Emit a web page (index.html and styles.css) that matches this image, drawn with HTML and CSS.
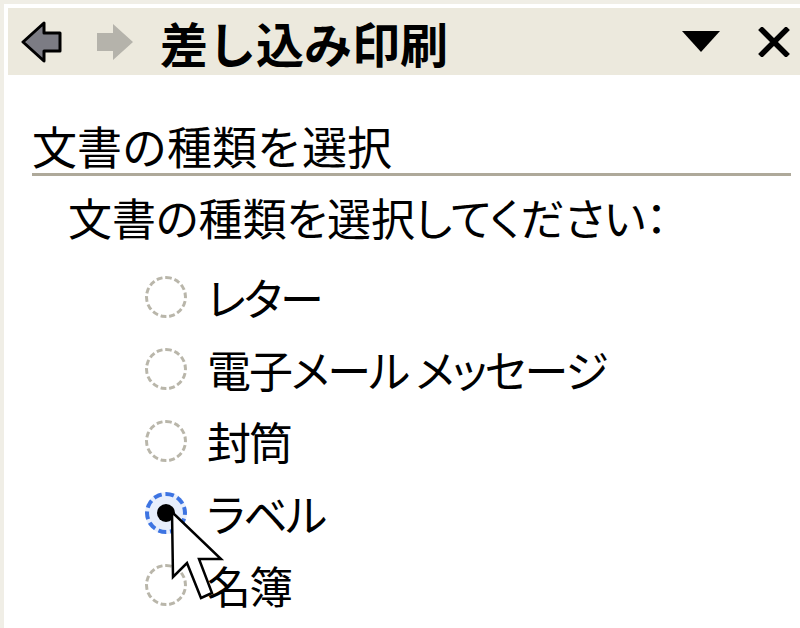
FILE: index.html
```html
<!DOCTYPE html>
<html lang="ja">
<head>
<meta charset="utf-8">
<link rel="stylesheet" href="styles.css">
</head>
<body>
<div class="frame">
  <div class="panel">
    <div class="header">
      <svg class="nav back" viewBox="0 0 42 42" width="42" height="42">
        <polygon points="2,21 23,2 23,12 39,12 39,30 23,30 23,40" fill="#7c7c84" stroke="#000" stroke-width="3" stroke-linejoin="round"/>
      </svg>
      <svg class="nav fwd" viewBox="0 0 40 40" width="40" height="40">
        <polygon points="38,20 18,2 18,11 2,11 2,29 18,29 18,38" fill="#b5b3ab"/>
      </svg>
      <div class="title">差し込み印刷</div>
      <svg class="drop" viewBox="0 0 38 22" width="38" height="22">
        <polygon points="0,0 38,0 19,21" fill="#000"/>
      </svg>
      <svg class="close" viewBox="0 0 32 30" width="32" height="30">
        <path d="M4 3 L28 27 M28 3 L4 27" stroke="#000" stroke-width="5.5" stroke-linecap="square"/>
      </svg>
    </div>
    <div class="content">
      <div class="section">文書の種類を選択</div>
      <div class="prompt">文書の種類を選択してください：</div>
      <ul class="options">
        <li class="opt"><span class="radio"></span><span class="label">レター</span></li>
        <li class="opt"><span class="radio"></span><span class="label">電子メール メッセージ</span></li>
        <li class="opt"><span class="radio"></span><span class="label">封筒</span></li>
        <li class="opt"><span class="radio checked"></span><span class="label">ラベル</span></li>
        <li class="opt"><span class="radio"></span><span class="label">名簿</span></li>
      </ul>
    </div>
  </div>
  <svg class="cursor" viewBox="0 0 60 96" width="60" height="96">
    <polygon points="2,2 3,67 17,53 31,88 42,83 29,49 51,49" fill="#fff" stroke="#000" stroke-width="2.5" stroke-linejoin="miter"/>
  </svg>
</div>
</body>
</html>
```

FILE: styles.css
```css
html, body {
  margin: 0;
  padding: 0;
  background: #f0eee6;
  width: 800px;
  height: 628px;
  overflow: hidden;
  font-family: "Noto Sans CJK JP", "Noto Sans", sans-serif;
  color: #000;
}

.frame {
  position: relative;
  width: 800px;
  height: 628px;
  padding: 4px 0 0 4px;
  box-sizing: border-box;
}

.panel {
  background: #fff;
  height: 100%;
  padding: 4px 0 0 4px;
  box-sizing: border-box;
}

.header {
  height: 67px;
  background: #ece9dd;
  display: flex;
  align-items: center;
  box-sizing: border-box;
  padding-left: 13px;
}

.nav { display: block; flex: none; }
.back { margin-right: 32px; }
.fwd { margin-right: 25px; }

.title {
  font-size: 48px;
  font-weight: bold;
  line-height: 1;
  flex: 1;
}

.drop { margin-right: 38px; margin-top: 0; flex: none; }
.close { margin-right: 10px; flex: none; }

.content {
  padding: 0 9px 0 24px;
}

.section {
  margin-top: 44px;
  font-size: 45px;
  line-height: 54px;
  height: 54px;
  border-bottom: 3px solid #aea99a;
}

.prompt {
  font-size: 44px;
  line-height: 54px;
  margin-top: 14px;
  padding-left: 36px;
  font-feature-settings: "palt";
}

.options {
  list-style: none;
  margin: 0;
  padding: 0 0 0 113px;
}

.opt {
  display: flex;
  align-items: center;
  height: 72px;
}

.opt:first-child { margin-top: 17px; }

.radio {
  width: 42px;
  height: 42px;
  border-radius: 50%;
  border: 3px dashed #b9b6aa;
  box-sizing: border-box;
  flex: none;
  margin-right: 20px;
  position: relative;
}

.radio.checked {
  border: 4px dashed #3d74e2;
  background: #e8effc;
}

.radio.checked::after {
  content: "";
  position: absolute;
  left: 8px;
  top: 8px;
  width: 18px;
  height: 18px;
  border-radius: 50%;
  background: #000;
}

.label {
  font-size: 44px;
  line-height: 1;
  letter-spacing: -2px;
  font-feature-settings: "palt";
  white-space: pre;
}

.cursor {
  position: absolute;
  left: 170px;
  top: 510px;
}
```
